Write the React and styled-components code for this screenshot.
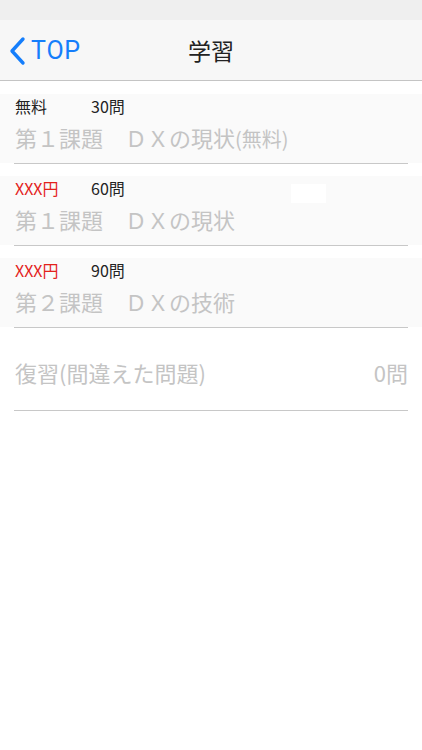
import React from 'react';
import styled, { createGlobalStyle } from 'styled-components';

const GlobalStyle = createGlobalStyle`
	html, body {
		margin: 0;
		padding: 0;
		background: #ffffff;
	}
	body {
		font-family: 'Noto Sans CJK JP', 'Noto Sans', sans-serif;
	}
`;

const courses = [
	{ price: '無料', paid: false, count: '30問', title: '第１課題　ＤＸの現状', suffix: '(無料)' },
	{ price: 'XXX円', paid: true, count: '60問', title: '第１課題　ＤＸの現状', blank: true },
	{ price: 'XXX円', paid: true, count: '90問', title: '第２課題　ＤＸの技術' },
];

function BackIcon() {
	return (
		<svg width='18' height='30' viewBox='0 0 18 30'>
			<polyline
				points='14,3 3,15 14,27'
				fill='none'
				stroke='#157efb'
				strokeWidth='3.4'
				strokeLinecap='round'
				strokeLinejoin='round'
			/>
		</svg>
	);
}

function App() {
	return (
		<Page>
			<GlobalStyle />
			<StatusBar />
			<NavBar>
				<BackButton>
					<BackIcon />
					<span>TOP</span>
				</BackButton>
				<Title>学習</Title>
			</NavBar>
			<List>
				{courses.map((c, i) => (
					<Row key={i}>
						<Card>
							<TopLine>
								<Price $paid={c.paid}>{c.price}</Price>
								<Count>{c.count}</Count>
								{c.blank && <Blank />}
							</TopLine>
							<MainText>
								{c.title}
								{c.suffix && <Small>{c.suffix}</Small>}
							</MainText>
						</Card>
						<Divider />
					</Row>
				))}
				<ReviewRow>
					<ReviewLine>
						<MainText>復習(間違えた問題)</MainText>
						<MainText>0問</MainText>
					</ReviewLine>
					<Divider />
				</ReviewRow>
			</List>
		</Page>
	);
}

const Page = styled.div`
	width: 422px;
	min-height: 750px;
	background: #ffffff;
`;

const StatusBar = styled.div`
	height: 20px;
	background: #efefef;
`;

const NavBar = styled.header`
	height: 60px;
	background: #f7f7f7;
	border-bottom: 1px solid #c4c4c4;
	display: flex;
	align-items: center;
	justify-content: center;
	position: relative;
`;

const BackButton = styled.div`
	position: absolute;
	left: 9px;
	top: 16px;
	display: flex;
	align-items: center;
	gap: 4px;
	color: #157efb;

	> span {
		font-family: 'Roboto', 'Noto Sans', sans-serif;
		font-size: 25px;
		line-height: 30px;
		letter-spacing: 0.8px;
	}
`;

const Title = styled.h1`
	margin: 0;
	font-size: 23px;
	font-weight: 400;
	color: #222222;
	line-height: 30px;
`;

const List = styled.div`
	display: flex;
	flex-direction: column;
	padding-top: 1px;
`;

const Row = styled.div`
	padding-top: 12px;
`;

const Card = styled.div`
	position: relative;
	height: 69px;
	background: #fafafa;
	padding: 2px 14px 0 15px;
	box-sizing: border-box;
`;

const TopLine = styled.div`
	display: flex;
	align-items: center;
	height: 20px;
	font-size: 16px;
	line-height: 20px;
`;

const Price = styled.span`
	width: 76px;
	color: ${(p) => (p.$paid ? '#e3221c' : '#222222')};
`;

const Count = styled.span`
	color: #222222;
`;

const Blank = styled.span`
	position: absolute;
	left: 291px;
	top: 8px;
	width: 35px;
	height: 19px;
	background: #ffffff;
`;

const MainText = styled.div`
	margin-top: 6px;
	font-size: 22px;
	line-height: 30px;
	color: #c4c4c4;
	white-space: nowrap;
`;

const Small = styled.span`
	font-size: 20px;
`;

const Divider = styled.div`
	height: 1px;
	margin: 0 14px;
	background: #c8c8c8;
`;

const ReviewRow = styled.div`
	padding-top: 23px;
`;

const ReviewLine = styled.div`
	display: flex;
	justify-content: space-between;
	padding: 0 14px 23px 15px;
`;

export default App;
